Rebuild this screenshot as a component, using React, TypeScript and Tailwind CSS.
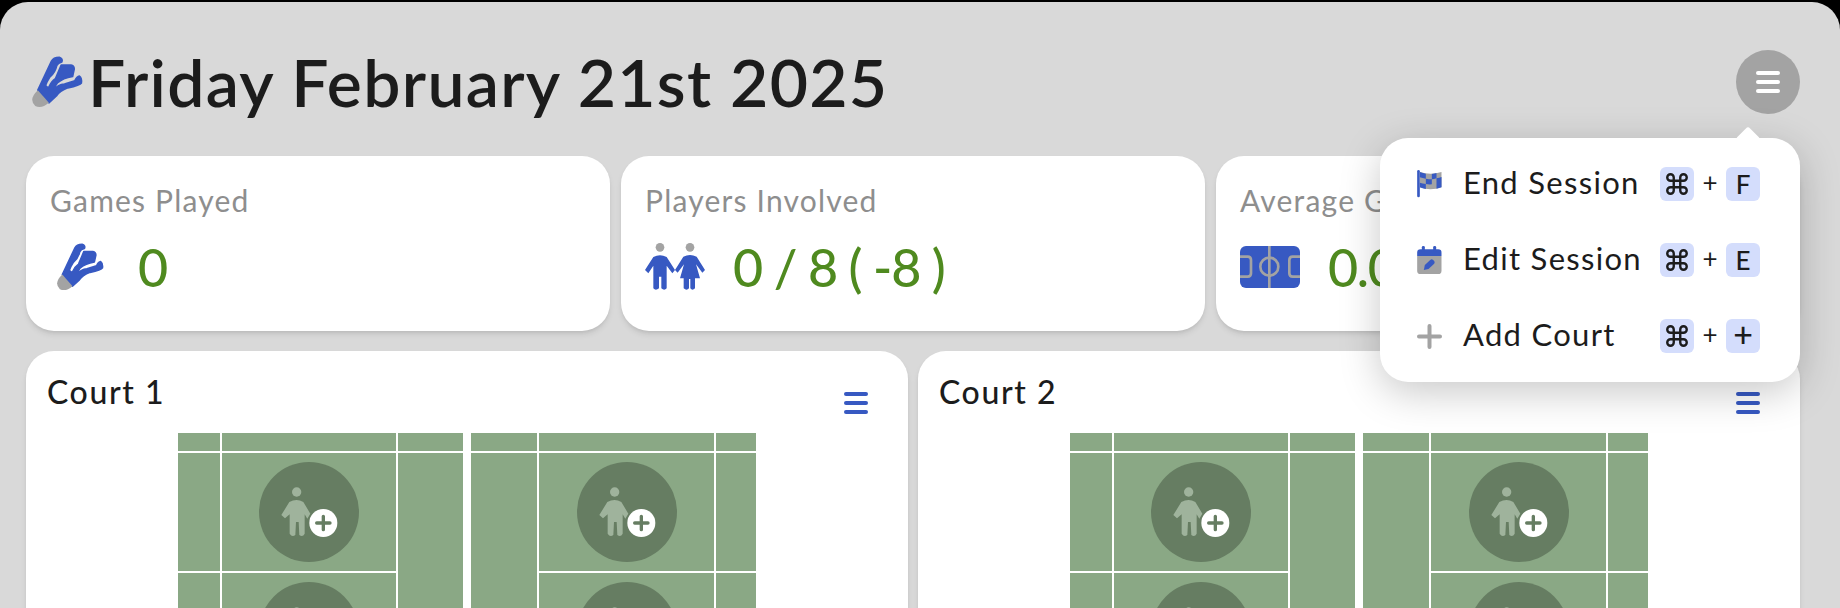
import { Command } from "lucide-react"

const BLUE = "#3759c2"

function Bars({ className }: { className: string }) {
  return (
    <div className="flex flex-col gap-[5px] w-6">
      <span className={`h-1 rounded-full ${className}`}></span>
      <span className={`h-1 rounded-full ${className}`}></span>
      <span className={`h-1 rounded-full ${className}`}></span>
    </div>
  )
}

function Shuttle({ size }: { size: number }) {
  return (
    <svg width={size} height={size} viewBox="38 62 158 160">
      <path
        fill={BLUE}
        stroke={BLUE}
        strokeWidth="5"
        strokeLinejoin="round"
        d="M58 167 L100 78 Q106 66 124 66 Q136 70 132 80 Q120 82 116 92 Q112 112 94 128 Q86 140 82 152 Q84 160 92 158 Q100 140 112 132 L130 90 L160 90 Q170 92 170 102 L165 125 Q135 130 118 145 Q110 155 108 165 Q120 150 140 148 L172 138 Q178 125 186 124 Q194 130 192 145 Q188 152 150 160 Q125 170 115 185 L92 206 Z"
      />
      <path fill="#a3a3a3" d="M58 167 L92 206 Q70 225 50 216 Q28 195 58 167 Z" />
    </svg>
  )
}

function Players() {
  return (
    <svg width="60" height="48" viewBox="30 24 180 144">
      <circle cx="75" cy="37" r="13" fill="#a3a3a3" />
      <circle cx="165" cy="37" r="13" fill="#a3a3a3" />
      <path
        fill={BLUE}
        d="M55 66 Q75 55 95 66 L120 105 L112 115 L95 92 L95 160 Q88 168 79 160 L79 125 L72 125 L72 160 Q62 168 55 160 L55 92 L40 115 L30 105 Z"
      />
      <path
        fill={BLUE}
        d="M145 65 Q165 55 185 65 L210 105 L202 113 L183 88 L195 130 L180 130 L180 160 Q172 168 166 160 L166 132 L162 132 L162 160 Q155 168 146 160 L146 130 L135 130 L147 88 L128 113 L120 105 Z"
      />
    </svg>
  )
}

function Pitch() {
  return (
    <svg width="60" height="42" viewBox="42 33 180 126">
      <rect x="42" y="33" width="180" height="126" rx="18" fill={BLUE} />
      <g fill="none" stroke="#a3a3a3" strokeWidth="8">
        <path d="M130 33 V159" />
        <circle cx="130" cy="95" r="27" />
        <path d="M42 65 H65 Q75 65 75 75 V115 Q75 125 65 125 H42" />
        <path d="M222 65 H200 Q190 65 190 75 V115 Q190 125 200 125 H222" />
      </g>
    </svg>
  )
}

function Flag() {
  return (
    <svg width="25" height="28" viewBox="52 60 74 84">
      <rect x="52" y="60" width="8" height="82" rx="4" fill={BLUE} />
      <path fill="#a3a3a3" d="M60 66 Q92 76 125 66 V112 Q92 124 60 112 Z" />
      <path
        fill={BLUE}
        d="M60 66 Q70 70 78 71 V86 Q68 85 60 82 Z M96 72 Q105 71 110 69 V85 Q102 88 96 88 Z M78 86 Q88 88 96 88 V103 Q86 104 78 102 Z M110 85 Q118 83 125 81 V112 Q118 115 110 116 V100 Z M60 98 Q68 101 78 102 V117 Q68 116 60 112 Z"
      />
    </svg>
  )
}

function CalendarEdit() {
  return (
    <svg width="25" height="28" viewBox="52 288 74 84">
      <path fill="#a3a3a3" d="M52 318 H125 V362 Q125 372 115 372 H62 Q52 372 52 362 Z" />
      <path fill={BLUE} d="M52 318 V308 Q52 298 62 298 H115 Q125 298 125 308 V318 Z" />
      <rect x="66" y="288" width="9" height="18" rx="4" fill={BLUE} />
      <rect x="100" y="288" width="9" height="18" rx="4" fill={BLUE} />
      <path fill={BLUE} d="M72 360 L75 345 L92 329 Q96 326 100 330 L103 333 Q106 337 103 341 L86 357 Z" />
    </svg>
  )
}

function AddPlayer() {
  return (
    <svg className="w-full h-full" viewBox="27 35 300 300">
      <circle cx="140" cy="125" r="14" fill="#9fb39c" />
      <path
        fill="#9fb39c"
        d="M118 155 Q140 143 160 155 L181 190 L172 205 L164 192 L164 250 Q158 262 148 254 L146 215 L138 215 L136 254 Q126 262 119 250 L119 192 L105 204 L94 194 Z"
      />
      <circle cx="220" cy="218" r="42" fill="#ffffff" />
      <path d="M220 198 V238 M200 218 H240" stroke="#667d62" strokeWidth="10" strokeLinecap="round" />
    </svg>
  )
}

function Box({ className = "" }: { className?: string }) {
  return (
    <div className={`bg-[#8aa885] flex items-center justify-center ${className}`}>
      <div className="w-[100px] h-[100px] rounded-full bg-[#667d62] shrink-0">
        <AddPlayer />
      </div>
    </div>
  )
}

function CourtCard({ name }: { name: string }) {
  return (
    <div className="bg-white rounded-t-[28px] pt-[22px] px-[21px] pb-4 shadow-md">
      <div className="flex justify-between items-start h-[60px]">
        <h3 className="text-[32px] leading-[38px] font-medium text-[#1c1c1c] tracking-[1.6px]">{name}</h3>
        <div className="mt-[19px] mr-[19px]">
          <Bars className="bg-[#3759c2]" />
        </div>
      </div>
      <div className="flex justify-center gap-2">
        {/* left half */}
        <div className="grid grid-cols-[42px_174px_65px] grid-rows-[18px_118px_118px] gap-[2px] bg-white w-[285px]">
          <div className="bg-[#8aa885]"></div>
          <div className="bg-[#8aa885]"></div>
          <div className="bg-[#8aa885]"></div>
          <div className="bg-[#8aa885]"></div>
          <Box />
          <div className="bg-[#8aa885] row-span-2"></div>
          <div className="bg-[#8aa885]"></div>
          <Box />
        </div>
        {/* right half */}
        <div className="grid grid-cols-[66px_175px_40px] grid-rows-[18px_118px_118px] gap-[2px] bg-white w-[285px]">
          <div className="bg-[#8aa885]"></div>
          <div className="bg-[#8aa885]"></div>
          <div className="bg-[#8aa885]"></div>
          <div className="bg-[#8aa885] row-span-2"></div>
          <Box />
          <div className="bg-[#8aa885]"></div>
          <Box />
          <div className="bg-[#8aa885]"></div>
        </div>
      </div>
    </div>
  )
}

function StatCard({ label, value, icon }: { label: string; value: string; icon: React.ReactNode }) {
  return (
    <div className="bg-white rounded-[28px] h-[175px] pt-[27px] px-6 shadow-md overflow-hidden">
      <p className="text-[30px] leading-[34px] text-[#8e8e8e] whitespace-nowrap tracking-[1.2px]">{label}</p>
      <div className="flex items-center gap-[28px] mt-[26px] h-12">
        <div className="w-[60px] flex justify-center shrink-0">{icon}</div>
        <span className="text-[52px] leading-none font-medium text-[#4f8a1f] whitespace-nowrap tracking-[-1.3px]">{value}</span>
      </div>
    </div>
  )
}

function Key({ children }: { children: React.ReactNode }) {
  return (
    <span className="w-[34px] h-[34px] rounded-md bg-[#d4ddfc] flex items-center justify-center text-[26px] font-medium leading-none text-[#1c1c1c]">
      {children}
    </span>
  )
}

function MenuRow({ icon, label, shortcut }: { icon: React.ReactNode; label: string; shortcut: React.ReactNode }) {
  return (
    <div className="flex items-center h-[76px]">
      <div className="w-[25px] flex justify-center shrink-0">{icon}</div>
      <span className="ml-[21px] w-[197px] pb-1 text-[31px] leading-[38px] text-[#1c1c1c] tracking-[1.3px] whitespace-nowrap">{label}</span>
      <Key>
        <Command size={26} strokeWidth={2.2} />
      </Key>
      <span className="w-8 pb-1 text-center text-[26px] leading-none text-[#1c1c1c]">+</span>
      <Key>{shortcut}</Key>
    </div>
  )
}

export default function App() {
  return (
    <div className="h-[608px] overflow-hidden bg-black pt-[2px] font-['Lato',sans-serif]">
      <div className="relative h-full bg-[#d9d9d9] rounded-t-[28px] pt-[48px] pl-[26px] pr-[40px]">
        {/* header */}
        <div className="flex items-center justify-between h-16 mb-[42px]">
          <div className="flex items-center gap-[5px] pl-[5px]">
            <Shuttle size={52} />
            <h1 className="text-[66px] leading-none font-semibold text-[#1c1c1c] tracking-[1.3px] whitespace-nowrap">
              Friday February 21st 2025
            </h1>
          </div>
          <button className="w-16 h-16 rounded-full bg-[#a3a3a3] flex items-center justify-center">
            <Bars className="bg-white" />
          </button>
        </div>

        {/* stats */}
        <div className="grid grid-cols-3 gap-[11px] mb-5">
          <StatCard label="Games Played" value="0" icon={<Shuttle size={48} />} />
          <StatCard label="Players Involved" value="0 / 8 ( -8 )" icon={<Players />} />
          <StatCard label="Average Game Time" value="0.0" icon={<Pitch />} />
        </div>

        {/* courts */}
        <div className="grid grid-cols-2 gap-[10px]">
          <CourtCard name="Court 1" />
          <CourtCard name="Court 2" />
        </div>

        {/* session menu */}
        <div className="absolute top-[136px] right-[40px] w-[420px] h-[244px] bg-white rounded-[28px] px-[37px] py-[8px] shadow-[0_10px_40px_rgba(0,0,0,0.22)]">
          <div className="absolute -top-[8px] right-[43px] w-[18px] h-[18px] bg-white rotate-45 rounded-[3px]"></div>
          <MenuRow icon={<Flag />} label="End Session" shortcut="F" />
          <MenuRow icon={<CalendarEdit />} label="Edit Session" shortcut="E" />
          <MenuRow
            icon={
              <svg width="25" height="25" viewBox="0 0 25 25">
                <path d="M12.5 2 V23 M2 12.5 H23" stroke="#a3a3a3" strokeWidth="4" strokeLinecap="round" />
              </svg>
            }
            label="Add Court"
            shortcut={<span className="text-[34px] leading-none pb-1">+</span>}
          />
        </div>
      </div>
    </div>
  )
}
